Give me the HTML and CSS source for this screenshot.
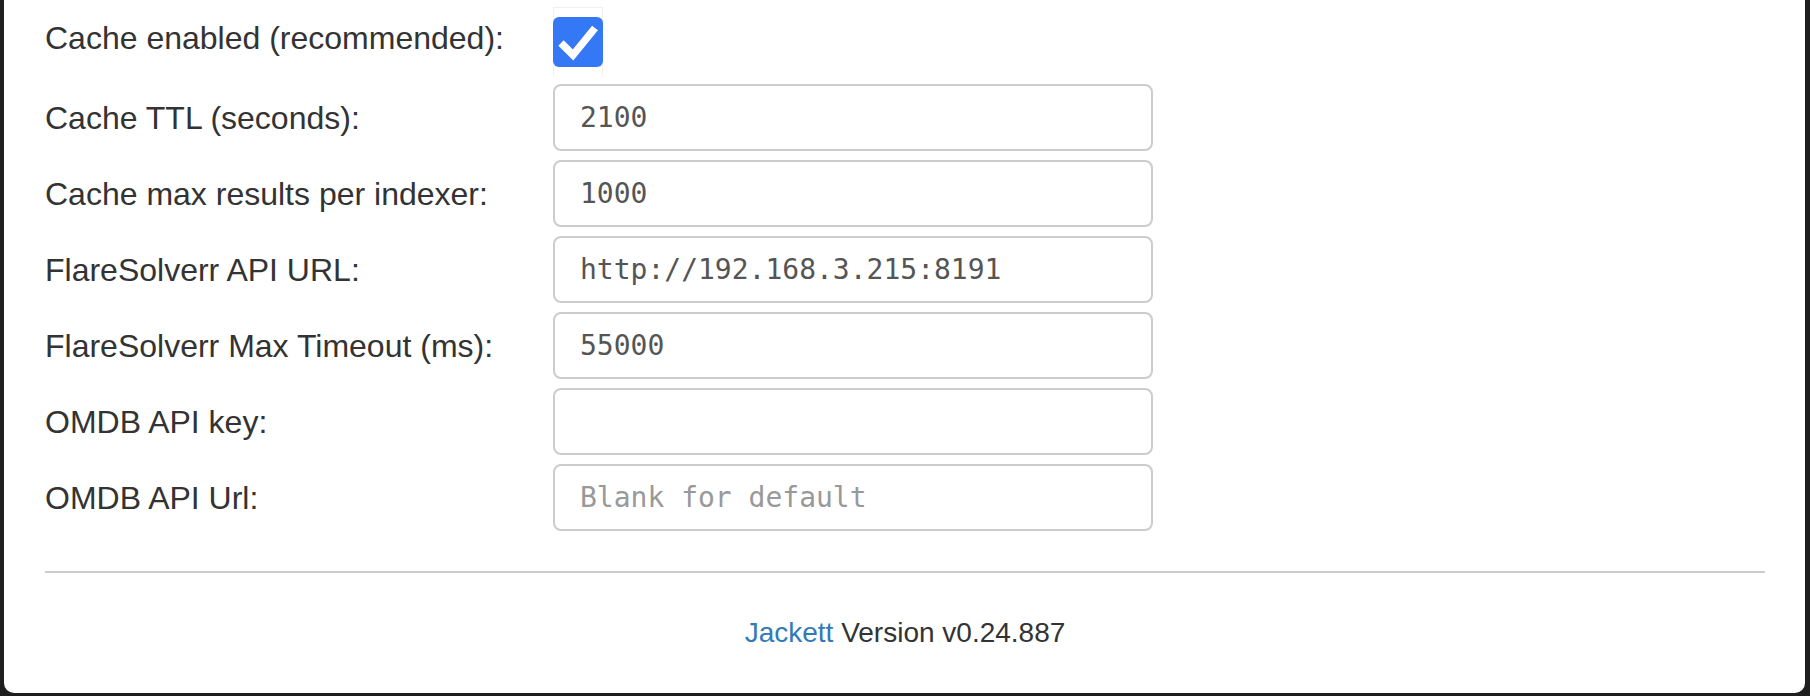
FILE: index.html
```html
<!DOCTYPE html>
<html>
<head>
<meta charset="utf-8">
<link rel="stylesheet" href="styles.css">
</head>
<body>
<div class="card">
  <form class="config">
    <label class="label label-first">Cache enabled (recommended):</label>
    <div class="check-wrap">
      <span class="checkbox">
        <svg width="50" height="50" viewBox="0 0 50 50"><polyline points="8,26 20,38 42,11" fill="none" stroke="#fff" stroke-width="7.5"/></svg>
      </span>
    </div>

    <label class="label">Cache TTL (seconds):</label>
    <input class="field" type="text" value="2100">

    <label class="label">Cache max results per indexer:</label>
    <input class="field" type="text" value="1000">

    <label class="label">FlareSolverr API URL:</label>
    <input class="field" type="text" value="http://192.168.3.215:8191">

    <label class="label">FlareSolverr Max Timeout (ms):</label>
    <input class="field" type="text" value="55000">

    <label class="label">OMDB API key:</label>
    <input class="field" type="text" value="">

    <label class="label">OMDB API Url:</label>
    <input class="field" type="text" placeholder="Blank for default">
  </form>
  <hr class="rule">
  <footer class="footer"><a class="link" href="#">Jackett</a> Version v0.24.887</footer>
</div>
</body>
</html>
```

FILE: styles.css
```css
html, body {
  margin: 0;
  padding: 0;
}
body {
  background: #1e1e1e;
  width: 1810px;
  height: 696px;
  overflow: hidden;
  font-family: "Liberation Sans", Arial, sans-serif;
  color: #333;
}
.card {
  margin: 0 5px 0 4px;
  height: 693px;
  box-sizing: border-box;
  background: #fff;
  border-radius: 0 0 10px 10px;
  padding: 8px 40px 0 41px;
}
.config {
  display: grid;
  grid-template-columns: 508px 600px;
  grid-auto-rows: 67px;
  row-gap: 9px;
  align-items: center;
}
.label {
  font-size: 32px;
  line-height: 40px;
  color: #333;
}
.label-first {
  align-self: start;
  margin-top: 10px;
}
.check-wrap {
  height: 69px;
  width: 50px;
  box-sizing: border-box;
  border: 1px solid #f0f0f0;
  border-bottom: none;
  display: flex;
  align-items: center;
  justify-content: center;
  margin-top: -1px;
}
.checkbox {
  width: 50px;
  height: 50px;
  background: #3478f6;
  border-radius: 6px;
  display: block;
}
.checkbox svg {
  display: block;
}
.field {
  box-sizing: border-box;
  width: 600px;
  height: 67px;
  border: 2px solid #ccc;
  border-radius: 8px;
  padding: 0 25px;
  font-family: "DejaVu Sans Mono", monospace;
  font-size: 28px;
  color: #555;
  background: #fff;
  outline: none;
}
.field::placeholder {
  color: #999;
}
.rule {
  margin: 40px 0 0 0;
  border: 0;
  border-top: 2px solid #ccc;
  height: 0;
}
.footer {
  margin-top: 40px;
  text-align: center;
  font-size: 28px;
  line-height: 40px;
  color: #333;
}
.link {
  color: #337ab7;
  text-decoration: none;
}
```
